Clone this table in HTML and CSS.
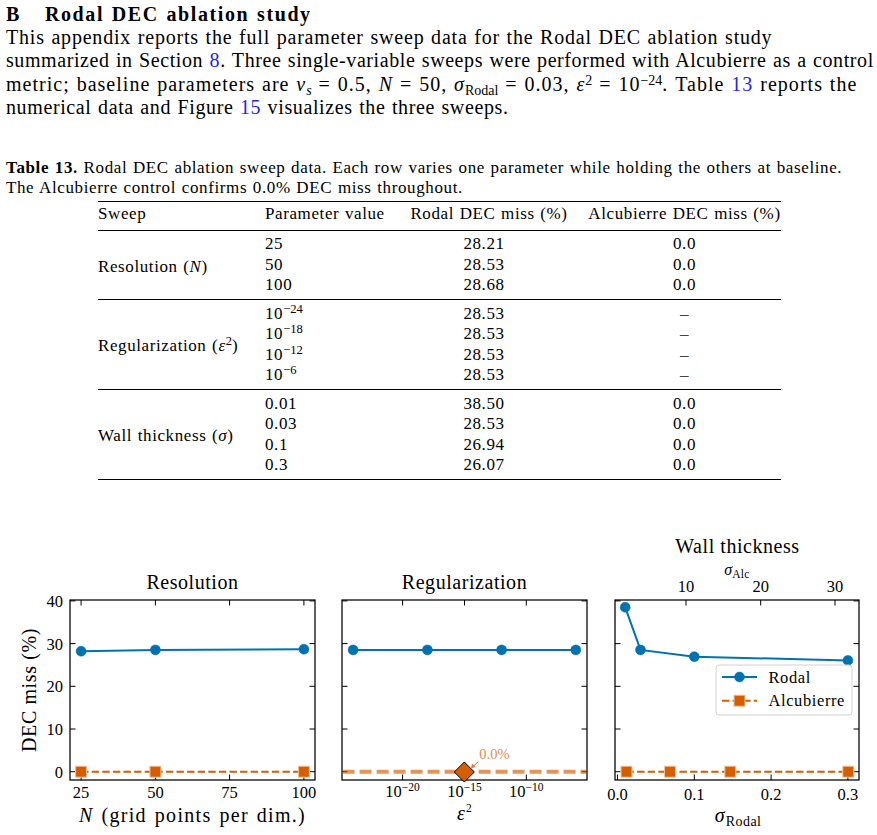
FILE: index.html
```html
<!DOCTYPE html>
<html lang="en">
<head>
<meta charset="utf-8">
<title>Rodal DEC ablation study</title>
<link rel="stylesheet" href="styles.css">
</head>
<body>
<div class="page">
  <h2 class="heading"><span class="secnum">B</span>Rodal DEC ablation study</h2>
  <p class="intro"><span class="line l1">This appendix reports the full parameter sweep data for the Rodal DEC ablation study</span><span class="line l2">summarized in Section <a class="ref">8</a>. Three single-variable sweeps were performed with Alcubierre as a control</span><span class="line l3">metric; baseline parameters are <i>v</i><sub><i>s</i></sub> = 0.5, <i>N</i> = 50, <i>σ</i><sub>Rodal</sub> = 0.03, <i>ε</i><sup>2</sup> = 10<sup>−24</sup>. Table <a class="ref">13</a> reports the</span><span class="line l4">numerical data and Figure <a class="ref">15</a> visualizes the three sweeps.</span></p>

  <p class="caption"><b>Table 13.</b> Rodal DEC ablation sweep data. Each row varies one parameter while holding the others at baseline.<br>The Alcubierre control confirms 0.0% DEC miss throughout.</p>

  <table class="sweep">
    <colgroup>
      <col class="c1"><col class="c2"><col class="c3"><col class="c4">
    </colgroup>
    <thead>
      <tr><th class="l">Sweep</th><th class="l">Parameter value</th><th>Rodal DEC miss (%)</th><th class="alc">Alcubierre DEC miss (%)</th></tr>
    </thead>
    <tbody class="g1">
      <tr class="first"><td class="grp" rowspan="3">Resolution (<i>N</i>)</td><td>25</td><td class="num">28.21</td><td class="alc">0.0</td></tr>
      <tr><td>50</td><td class="num">28.53</td><td class="alc">0.0</td></tr>
      <tr class="last"><td>100</td><td class="num">28.68</td><td class="alc">0.0</td></tr>
    </tbody>
    <tbody>
      <tr class="first"><td class="grp" rowspan="4">Regularization (<i>ε</i><sup>2</sup>)</td><td>10<sup>−24</sup></td><td class="num">28.53</td><td class="alc dash">–</td></tr>
      <tr><td>10<sup>−18</sup></td><td class="num">28.53</td><td class="alc dash">–</td></tr>
      <tr><td>10<sup>−12</sup></td><td class="num">28.53</td><td class="alc dash">–</td></tr>
      <tr class="last"><td>10<sup>−6</sup></td><td class="num">28.53</td><td class="alc dash">–</td></tr>
    </tbody>
    <tbody>
      <tr class="first"><td class="grp" rowspan="4">Wall thickness (<i>σ</i>)</td><td>0.01</td><td class="num">38.50</td><td class="alc">0.0</td></tr>
      <tr><td>0.03</td><td class="num">28.53</td><td class="alc">0.0</td></tr>
      <tr><td>0.1</td><td class="num">26.94</td><td class="alc">0.0</td></tr>
      <tr class="last"><td>0.3</td><td class="num">26.07</td><td class="alc">0.0</td></tr>
    </tbody>
  </table>
</div>

<svg class="figure" viewBox="0 530 877 305" width="877" height="305" xmlns="http://www.w3.org/2000/svg">
  <!-- ===== Panel 1: Resolution ===== -->
  <text class="title" x="192.5" y="589" text-anchor="middle">Resolution</text>
  <text class="ylabel" x="36" y="690" text-anchor="middle" transform="rotate(-90 36 690)">DEC miss (%)</text>
  <g class="ticklab" text-anchor="end">
    <text x="63" y="777.5">0</text>
    <text x="63" y="735">10</text>
    <text x="63" y="692.3">20</text>
    <text x="63" y="649.6">30</text>
    <text x="63" y="606.9">40</text>
  </g>
  <path class="ticks" d="M70 771.7h5.5M70 729h5.5M70 686.3h5.5M70 643.6h5.5M70 600.9h5.5
    M315 771.7h-5.5M315 729h-5.5M315 686.3h-5.5M315 643.6h-5.5M315 600.9h-5.5
    M81.1 780v-5.5M155.4 780v-5.5M229.6 780v-5.5M303.9 780v-5.5
    M81.1 600v5.5M155.4 600v5.5M229.6 600v5.5M303.9 600v5.5"/>
  <rect class="axes" x="70" y="600" width="245" height="180"/>
  <polyline class="rodal" points="81.1,651.2 155.4,649.9 303.9,649.2"/>
  <g class="rodal-m">
    <circle cx="81.1" cy="651.2" r="5"/><circle cx="155.4" cy="649.9" r="5"/><circle cx="303.9" cy="649.2" r="5"/>
  </g>
  <line class="alc" x1="81.1" y1="771.7" x2="303.9" y2="771.7"/>
  <g class="alc-m">
    <rect x="75.6" y="766.2" width="11" height="11"/><rect x="149.9" y="766.2" width="11" height="11"/><rect x="298.4" y="766.2" width="11" height="11"/>
  </g>
  <g class="ticklab" text-anchor="middle">
    <text x="81.1" y="797.5">25</text>
    <text x="155.4" y="797.5">50</text>
    <text x="229.6" y="797.5">75</text>
    <text x="303.9" y="797.5">100</text>
  </g>
  <text class="xlabel" x="192.5" y="822" text-anchor="middle"><tspan font-style="italic">N</tspan> (grid points per dim.)</text>

  <!-- ===== Panel 2: Regularization ===== -->
  <text class="title" x="464.5" y="589" text-anchor="middle">Regularization</text>
  <path class="ticks" d="M342 771.7h5.5M342 729h5.5M342 686.3h5.5M342 643.6h5.5M342 600.9h5.5
    M587 771.7h-5.5M587 729h-5.5M587 686.3h-5.5M587 643.6h-5.5M587 600.9h-5.5
    M402.6 780v-5.5M464.5 780v-5.5M526.3 780v-5.5
    M402.6 600v5.5M464.5 600v5.5M526.3 600v5.5"/>
  <rect class="axes" x="342" y="600" width="245" height="180"/>
  <polyline class="rodal" points="353.1,649.9 427.4,649.9 501.6,649.9 575.8,649.9"/>
  <g class="rodal-m">
    <circle cx="353.1" cy="649.9" r="5"/><circle cx="427.4" cy="649.9" r="5"/><circle cx="501.6" cy="649.9" r="5"/><circle cx="575.8" cy="649.9" r="5"/>
  </g>
  <line class="alc-thick" x1="342.6" y1="771.7" x2="586.4" y2="771.7"/>
  <polygon class="diamond" points="464.3,762 474.3,772 464.3,782 454.3,772"/>
  <line class="annot" x1="478.5" y1="761.5" x2="473" y2="766.5"/>
  <polygon class="annot-head" points="471,768.5 472,763.5 475.5,766.8"/>
  <text class="annot-text" x="479.3" y="758.7">0.0%</text>
  <g class="ticklab" text-anchor="middle">
    <text x="402.6" y="797">10<tspan class="sup" dy="-6.5">−20</tspan></text>
    <text x="464.5" y="797">10<tspan class="sup" dy="-6.5">−15</tspan></text>
    <text x="526.3" y="797">10<tspan class="sup" dy="-6.5">−10</tspan></text>
  </g>
  <text class="xlabel" x="465" y="820" text-anchor="middle"><tspan font-style="italic">ε</tspan><tspan class="sup" dy="-8">2</tspan></text>

  <!-- ===== Panel 3: Wall thickness ===== -->
  <text class="title" x="737.5" y="553" text-anchor="middle">Wall thickness</text>
  <text class="toplabel" x="737" y="575" text-anchor="middle"><tspan font-style="italic">σ</tspan><tspan class="sub" dy="3">Alc</tspan></text>
  <g class="ticklab" text-anchor="middle">
    <text x="686" y="592">10</text>
    <text x="760.7" y="592">20</text>
    <text x="835" y="592">30</text>
  </g>
  <path class="ticks" d="M615 771.7h5.5M615 729h5.5M615 686.3h5.5M615 643.6h5.5M615 600.9h5.5
    M859 771.7h-5.5M859 729h-5.5M859 686.3h-5.5M859 643.6h-5.5M859 600.9h-5.5
    M617.5 780v-5.5M694.3 780v-5.5M771.1 780v-5.5M847.9 780v-5.5
    M686 600v5.5M760.7 600v5.5M835 600v5.5"/>
  <rect class="axes" x="615" y="600" width="244" height="180"/>
  <polyline class="rodal" points="625.2,607.3 640.5,649.9 694.3,656.7 847.9,660.4"/>
  <g class="rodal-m">
    <circle cx="625.2" cy="607.3" r="5"/><circle cx="640.5" cy="649.9" r="5"/><circle cx="694.3" cy="656.7" r="5"/><circle cx="847.9" cy="660.4" r="5"/>
  </g>
  <line class="alc" x1="626.5" y1="771.7" x2="848.3" y2="771.7"/>
  <g class="alc-m">
    <rect x="621" y="766.2" width="11" height="11"/><rect x="664.5" y="766.2" width="11" height="11"/><rect x="724.8" y="766.2" width="11" height="11"/><rect x="842.8" y="766.2" width="11" height="11"/>
  </g>
  <g class="legend">
    <rect class="legend-box" x="716" y="665" width="136" height="50" rx="3"/>
    <line class="rodal" x1="722" y1="677" x2="757" y2="677"/>
    <circle class="rodal-dot" cx="739.5" cy="677" r="5"/>
    <text class="legend-text" x="768.5" y="682.5">Rodal</text>
    <line class="alc" x1="722" y1="700.7" x2="757" y2="700.7"/>
    <rect class="alc-sq" x="734" y="695.2" width="11" height="11"/>
    <text class="legend-text" x="768.5" y="706">Alcubierre</text>
  </g>
  <g class="ticklab" text-anchor="middle">
    <text x="617.5" y="799.5">0.0</text>
    <text x="694.3" y="799.5">0.1</text>
    <text x="771.1" y="799.5">0.2</text>
    <text x="847.9" y="799.5">0.3</text>
  </g>
  <text class="xlabel" x="738" y="822" text-anchor="middle"><tspan font-style="italic">σ</tspan><tspan class="sub-lg" dy="4">Rodal</tspan></text>
</svg>
</body>
</html>
```

FILE: styles.css
```css
html, body {
  margin: 0;
  padding: 0;
  background: #ffffff;
  overflow: hidden;
}

body {
  font-family: "Liberation Serif", "Times New Roman", serif;
  color: #000000;
}

.page {
  padding: 0 6px;
}

.heading {
  margin: 3px 0 0;
  font-size: 20px;
  line-height: 23px;
  font-weight: bold;
  letter-spacing: 1.6px;
  word-spacing: 1.1px;
  white-space: nowrap;
}

.secnum {
  margin-right: 24px;
}

.intro {
  margin: 0;
  font-size: 20px;
  line-height: 23.3px;
  word-spacing: 0.85px;
  white-space: nowrap;
}

.line {
  display: block;
}

.l1 { letter-spacing: 0.8px; }
.l2 { letter-spacing: 0.58px; }
.l3 { letter-spacing: 1.02px; }
.l4 { letter-spacing: 0.62px; }

sub, sup {
  font-size: 0.7em;
  line-height: 0;
  letter-spacing: 0;
}

sup {
  vertical-align: 0.45em;
}

sub {
  vertical-align: -0.25em;
}

.ref {
  color: #1f1ff0;
  text-decoration: none;
}

.caption {
  margin: 39px 0 0;
  font-size: 17px;
  line-height: 20px;
  letter-spacing: 0.62px;
  word-spacing: 0.8px;
  white-space: nowrap;
}

.sweep {
  margin: 3px 0 0 92px;
  width: 683px;
  table-layout: fixed;
  border-collapse: collapse;
  border-top: 1.5px solid #000;
  border-bottom: 1.5px solid #000;
  font-size: 17px;
  line-height: 20.3px;
  letter-spacing: 0.6px;
  word-spacing: 0.8px;
}

.sweep sup {
  font-size: 0.74em;
}

.c1 { width: 167px; }
.c2 { width: 135px; }
.c3 { width: 178px; }
.c4 { width: 203px; }

.sweep th {
  font-weight: normal;
  padding: 2px 0 6px;
  text-align: center;
  white-space: nowrap;
}

.sweep th.l {
  text-align: left;
}

.sweep thead {
  border-bottom: 1px solid #000;
}

.sweep tbody {
  border-bottom: 1px solid #000;
}

.sweep tbody:last-child {
  border-bottom: 1.5px solid #000;
}

.sweep td {
  padding: 0;
  text-align: left;
  white-space: nowrap;
}

.sweep tr.first td {
  padding-top: 4px;
}

.sweep .g1 tr.first td {
  padding-top: 3px;
}

.sweep tr.last td {
  padding-bottom: 3.7px;
}

.sweep td.grp {
  padding: 0;
  vertical-align: middle;
}

.sweep td.num {
  text-align: center;
  padding-right: 10px;
}

.sweep .alc {
  text-align: center;
  padding-left: 10px;
}

.sweep td.dash {
  color: #444;
}

/* ---------- figure ---------- */
.figure {
  display: block;
  margin-top: 50px;
}

.figure text {
  font-family: "Liberation Serif", "Times New Roman", serif;
  fill: #000;
}

.title {
  font-size: 20px;
  letter-spacing: 0.55px;
}

.ylabel {
  font-size: 20px;
  letter-spacing: 0.6px;
}

.xlabel {
  font-size: 20px;
  letter-spacing: 1.3px;
  word-spacing: 1.6px;
}

.ticklab text {
  font-size: 16.5px;
}

.sup {
  font-size: 11.5px;
}

.toplabel {
  font-size: 16px;
}

.sub {
  font-size: 11.5px;
  letter-spacing: 0.3px;
}

.sub-lg {
  font-size: 14px;
  letter-spacing: 0.4px;
}

.axes {
  fill: none;
  stroke: #000;
  stroke-width: 1.25;
}

.ticks {
  fill: none;
  stroke: #000;
  stroke-width: 1;
}

.rodal {
  fill: none;
  stroke: #0072b2;
  stroke-width: 2;
}

.rodal-m circle,
.rodal-dot {
  fill: #0072b2;
  stroke: #0072b2;
  stroke-width: 0.5;
}

.alc {
  stroke: #d55e00;
  stroke-width: 2;
  stroke-dasharray: 7.4 3.2;
}

.alc-m rect,
.alc-sq {
  fill: #d55e00;
  stroke: #f2c2a0;
  stroke-width: 1;
}

.alc-thick {
  stroke: #d55e00;
  stroke-opacity: 0.65;
  stroke-width: 4;
  stroke-dasharray: 12 5;
}

.diamond {
  fill: #d55e00;
  stroke: #000;
  stroke-width: 1;
}

.annot {
  stroke: #e07a35;
  stroke-width: 1;
}

.annot-head {
  fill: #e07a35;
}

.annot-text {
  font-size: 14.5px;
  fill: #e38b4f !important;
}

.legend-box {
  fill: #ffffff;
  fill-opacity: 0.85;
  stroke: #d2d2d2;
  stroke-width: 1;
}

.legend-text {
  font-size: 16.5px;
  letter-spacing: 0.6px;
}
```
